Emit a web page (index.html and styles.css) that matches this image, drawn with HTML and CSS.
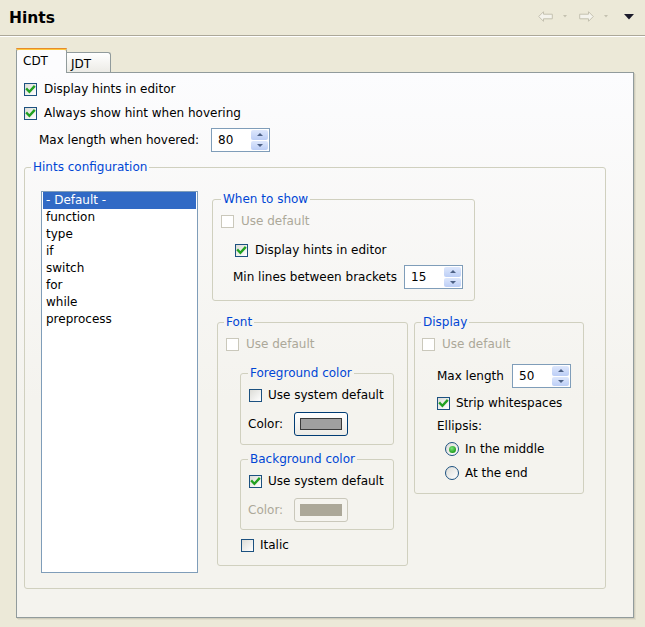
FILE: index.html
```html
<!DOCTYPE html>
<html>
<head>
<meta charset="utf-8">
<title>Hints</title>
<link rel="stylesheet" href="styles.css">
</head>
<body>
<header class="title-bar">
  <h1 class="title">Hints</h1>
  <div class="nav">
    <svg class="nav-arrow" width="15" height="11" viewBox="0 0 15 11"><path d="M0.7 5.5 L5.5 0.7 V3.2 H14.3 V7.8 H5.5 V10.3 Z" fill="#F4F3EC" stroke="#C4C1B0" stroke-width="1"/></svg>
    <svg class="nav-drop" width="4" height="3" viewBox="0 0 4 3"><path d="M0 0 H4 L2 2.5 Z" fill="#C4C1B0"/></svg>
    <svg class="nav-arrow fwd" width="15" height="11" viewBox="0 0 15 11"><path d="M14.3 5.5 L9.5 0.7 V3.2 H0.7 V7.8 H9.5 V10.3 Z" fill="#F4F3EC" stroke="#C4C1B0" stroke-width="1"/></svg>
    <svg class="nav-drop" width="4" height="3" viewBox="0 0 4 3"><path d="M0 0 H4 L2 2.5 Z" fill="#C4C1B0"/></svg>
    <svg class="nav-menu" width="10" height="6" viewBox="0 0 10 6"><path d="M0 0 H10 L5 5.5 Z" fill="#1A1A2A"/></svg>
  </div>
</header>

<main class="content">
  <div class="tabs">
    <div class="tab active">CDT</div>
    <div class="tab">JDT</div>
  </div>

  <section class="panel">
    <div class="row row-top">
      <span class="cb checked"><svg viewBox="0 0 11 11"><path d="M2 5.3 L4.4 7.8 L9 2.8" /></svg></span>
      <span>Display hints in editor</span>
    </div>
    <div class="row row-second">
      <span class="cb checked"><svg viewBox="0 0 11 11"><path d="M2 5.3 L4.4 7.8 L9 2.8" /></svg></span>
      <span>Always show hint when hovering</span>
    </div>
    <div class="row field-row max-hover">
      <span class="field-label w-hover">Max length when hovered:</span>
      <div class="spin">
        <span class="spin-val">80</span>
        <div class="spin-btns"><span class="spin-up"></span><span class="spin-down"></span></div>
      </div>
    </div>

    <fieldset class="group config">
      <legend>Hints configuration</legend>
      <div class="config-body">
        <ul class="list">
          <li class="selected">- Default -</li>
          <li>function</li>
          <li>type</li>
          <li>if</li>
          <li>switch</li>
          <li>for</li>
          <li>while</li>
          <li>preprocess</li>
        </ul>

        <div class="settings">
          <fieldset class="group when">
            <legend>When to show</legend>
            <div class="row disabled when-default">
              <span class="cb"></span><span>Use default</span>
            </div>
            <div class="row when-display">
              <span class="cb checked"><svg viewBox="0 0 11 11"><path d="M2 5.3 L4.4 7.8 L9 2.8" /></svg></span>
              <span>Display hints in editor</span>
            </div>
            <div class="row field-row when-min">
              <span class="field-label w-min">Min lines between brackets</span>
              <div class="spin">
                <span class="spin-val">15</span>
                <div class="spin-btns"><span class="spin-up"></span><span class="spin-down"></span></div>
              </div>
            </div>
          </fieldset>

          <div class="lower">
            <fieldset class="group font">
              <legend>Font</legend>
              <div class="row disabled font-default">
                <span class="cb"></span><span>Use default</span>
              </div>

              <fieldset class="group color-group fg">
                <legend>Foreground color</legend>
                <div class="row sys-row">
                  <span class="cb plain"></span><span>Use system default</span>
                </div>
                <div class="row field-row color-row">
                  <span class="field-label w-color">Color:</span>
                  <span class="color-btn"><span class="swatch"></span></span>
                </div>
              </fieldset>

              <fieldset class="group color-group bg">
                <legend>Background color</legend>
                <div class="row sys-row">
                  <span class="cb checked"><svg viewBox="0 0 11 11"><path d="M2 5.3 L4.4 7.8 L9 2.8" /></svg></span>
                  <span>Use system default</span>
                </div>
                <div class="row field-row color-row disabled">
                  <span class="field-label w-color">Color:</span>
                  <span class="color-btn off"><span class="swatch"></span></span>
                </div>
              </fieldset>

              <div class="row italic-row">
                <span class="cb plain"></span><span>Italic</span>
              </div>
            </fieldset>

            <fieldset class="group display">
              <legend>Display</legend>
              <div class="row disabled disp-default">
                <span class="cb"></span><span>Use default</span>
              </div>
              <div class="row field-row disp-max">
                <span class="field-label w-max">Max length</span>
                <div class="spin">
                  <span class="spin-val">50</span>
                  <div class="spin-btns"><span class="spin-up"></span><span class="spin-down"></span></div>
                </div>
              </div>
              <div class="row disp-strip">
                <span class="cb checked"><svg viewBox="0 0 11 11"><path d="M2 5.3 L4.4 7.8 L9 2.8" /></svg></span>
                <span>Strip whitespaces</span>
              </div>
              <div class="row disp-ellipsis">Ellipsis:</div>
              <div class="row radio-row first">
                <span class="rb checked"></span><span>In the middle</span>
              </div>
              <div class="row radio-row second">
                <span class="rb"></span><span>At the end</span>
              </div>
            </fieldset>
          </div>
        </div>
      </div>
    </fieldset>
  </section>
</main>
</body>
</html>
```

FILE: styles.css
```css
* { box-sizing: border-box; }

html, body { margin: 0; padding: 0; }

body {
  width: 645px;
  height: 627px;
  overflow: hidden;
  background: #ECE9D8;
  font: 12px/16px "DejaVu Sans", sans-serif;
  color: #000;
}

/* ---------- title bar ---------- */
.title-bar {
  height: 36px;
  display: flex;
  justify-content: space-between;
  align-items: center;
  padding: 0 11px 0 9px;
  border-bottom: 1px solid #ACA899;
  box-shadow: 0 1px 0 #FFFFFF;
}

.title {
  margin: 0;
  font-size: 15.5px;
  font-weight: bold;
  line-height: 20px;
  color: #000;
}

.nav {
  display: flex;
  align-items: center;
  align-self: flex-start;
  padding-top: 11px;
}

.nav svg { display: block; }
.nav-drop { margin-left: 10px; margin-right: 12px; }
.nav-drop + .nav-menu { margin-left: 4px; }

/* ---------- tabs ---------- */
.content { padding: 12px 0 0 16px; }

.tabs {
  display: flex;
  align-items: flex-end;
  height: 24px;
}

.tab {
  border: 1px solid #919B9C;
  border-bottom: none;
  border-radius: 3px 3px 0 0;
}

.tab.active {
  position: relative;
  z-index: 1;
  width: 51px;
  height: 25px;
  margin-bottom: -1px;
  padding: 3px 0 0 6px;
  border-top: 2px solid #FFC83C;
  background: #FCFCFE;
}

.tab.active::before {
  content: "";
  position: absolute;
  left: -1px;
  right: -1px;
  top: -2px;
  height: 1px;
  background: #E68B2C;
  border-radius: 3px 3px 0 0;
}

.tab:not(.active) {
  width: 44px;
  height: 20px;
  padding: 3px 0 0 4px;
  border-left: none;
  border-radius: 0 3px 0 0;
  background: linear-gradient(#FFFFFF, #ECEBE6);
}

/* ---------- panel ---------- */
.panel {
  width: 618px;
  height: 546px;
  padding: 0 0 0 7px;
  border: 1px solid #919B9C;
  background: linear-gradient(#FCFCFE, #F4F3EE 60%);
  box-shadow: 1px 1px 0 #D0CDBC, 2px 2px 0 #E1DECD;
}

.row {
  display: flex;
  align-items: center;
  height: 16px;
  white-space: nowrap;
}

.row-top { margin-top: 8px; }
.row-second { margin-top: 8px; }
.max-hover { margin-top: 7px; padding-left: 15px; }

.field-row { height: 24px; }
.field-label { flex: none; }
.w-hover { width: 172px; }
.w-min { width: 171px; }
.w-max { width: 75px; }
.w-color { width: 46px; }

/* ---------- checkbox ---------- */
.cb {
  flex: none;
  width: 13px;
  height: 13px;
  margin-right: 7px;
  border: 1px solid #1C5180;
  background: linear-gradient(135deg, #DCDCD7, #FFFFFF);
  display: flex;
  align-items: center;
  justify-content: center;
}

.cb svg { width: 11px; height: 11px; display: block; }
.cb svg path {
  fill: none;
  stroke: #21A121;
  stroke-width: 2.4;
  stroke-linecap: square;
}

.disabled { color: #ACA899; }
.disabled .cb {
  border-color: #CAC8BB;
  background: #FFFFFF;
}

/* ---------- radio ---------- */
.rb {
  flex: none;
  width: 14px;
  height: 14px;
  margin-right: 6px;
  border: 1px solid #1C5180;
  border-radius: 50%;
  background: linear-gradient(135deg, #DCDCD7, #FFFFFF);
  display: flex;
  align-items: center;
  justify-content: center;
}

.rb.checked::after {
  content: "";
  width: 7px;
  height: 7px;
  border-radius: 50%;
  background: radial-gradient(circle at 40% 35%, #7BE37B, #21A121 70%);
}

/* ---------- spinner ---------- */
.spin {
  flex: none;
  width: 59px;
  height: 24px;
  border: 1px solid #7F9DB9;
  background: #FFFFFF;
  display: flex;
  align-items: center;
  justify-content: space-between;
  padding: 1px 1px 1px 6px;
}

.spin-btns {
  width: 17px;
  height: 20px;
  display: flex;
  flex-direction: column;
  gap: 1px;
}

.spin-up, .spin-down {
  flex: 1;
  border-radius: 2px;
  background: linear-gradient(#DDE7FC, #BCCEF6);
  display: flex;
  align-items: center;
  justify-content: center;
}

.spin-up::after, .spin-down::after {
  content: "";
  width: 0;
  height: 0;
  border-left: 3px solid transparent;
  border-right: 3px solid transparent;
}

.spin-up::after { border-bottom: 3px solid #4D6185; }
.spin-down::after { border-top: 3px solid #4D6185; }

/* ---------- groups ---------- */
.group {
  margin: 0;
  padding: 0;
  min-width: 0;
  border: 1px solid #D0D0BF;
  border-radius: 3px;
}

.group legend {
  padding: 0 2px;
  margin-left: 6px;
  line-height: 14px;
  color: #0046D5;
}

.config {
  width: 582px;
  margin-top: 8px;
}

.config-body {
  display: flex;
  align-items: flex-start;
  padding: 17px 0 15px 16px;
}

.list {
  flex: none;
  width: 157px;
  height: 382px;
  margin: 0 14px 0 0;
  padding: 0;
  list-style: none;
  border: 1px solid #7F9DB9;
  background: #FFFFFF;
}

.list li {
  height: 17px;
  line-height: 17px;
  padding-left: 4px;
}

.list li.selected {
  margin: 0 1px;
  padding-left: 3px;
  background: #316AC5;
  color: #FFFFFF;
}

.settings { padding-top: 1px; }

/* when to show */
.when {
  width: 263px;
  padding-bottom: 11px;
}
.when legend { margin-left: 8px; }
.when-default { margin-top: 7px; padding-left: 8px; }
.when-display { margin-top: 13px; padding-left: 22px; }
.when-min { margin-top: 7px; padding-left: 20px; }

/* lower row */
.lower {
  display: flex;
  align-items: flex-start;
  gap: 6px;
  margin-top: 14px;
  padding-left: 5px;
}

.font {
  width: 191px;
  padding-bottom: 12px;
}

.font-default { margin-top: 7px; padding-left: 8px; }

.color-group {
  width: 154px;
  margin-left: 22px;
}
.color-group legend { margin-left: 7px; }
.fg { margin-top: 14px; padding-bottom: 8px; }
.bg { margin-top: 7px; padding-bottom: 7px; }

.sys-row { margin-top: 7px; padding-left: 8px; }
.sys-row .cb { margin-right: 6px; }
.color-row { margin-top: 9px; padding-left: 7px; }
.bg .color-row { margin-top: 9px; }

.color-btn {
  flex: none;
  width: 54px;
  height: 24px;
  padding: 5px 5px;
  border: 1px solid #003C74;
  border-radius: 3px;
  background: linear-gradient(#FFFFFF, #ECEBE6);
  display: flex;
}

.swatch {
  flex: 1;
  border: 1px solid #3A3A3A;
  background: #A0A0A0;
}

.color-btn.off {
  border-color: #CAC8BB;
  background: #F5F4EF;
}

.color-btn.off .swatch {
  border-color: #ACA899;
  background: #ACA899;
}

.italic-row { margin-top: 7px; padding-left: 23px; }
.italic-row .cb { margin-right: 6px; }

/* display */
.display {
  width: 170px;
  padding-bottom: 12px;
}
.disp-default { margin-top: 7px; padding-left: 7px; }
.disp-max { margin-top: 12px; padding-left: 22px; }
.disp-strip { margin-top: 7px; padding-left: 22px; }
.disp-strip .cb { margin-right: 6px; }
.disp-ellipsis { margin-top: 7px; padding-left: 22px; }
.radio-row { padding-left: 30px; }
.radio-row.first { margin-top: 7px; }
.radio-row.second { margin-top: 8px; }
```
